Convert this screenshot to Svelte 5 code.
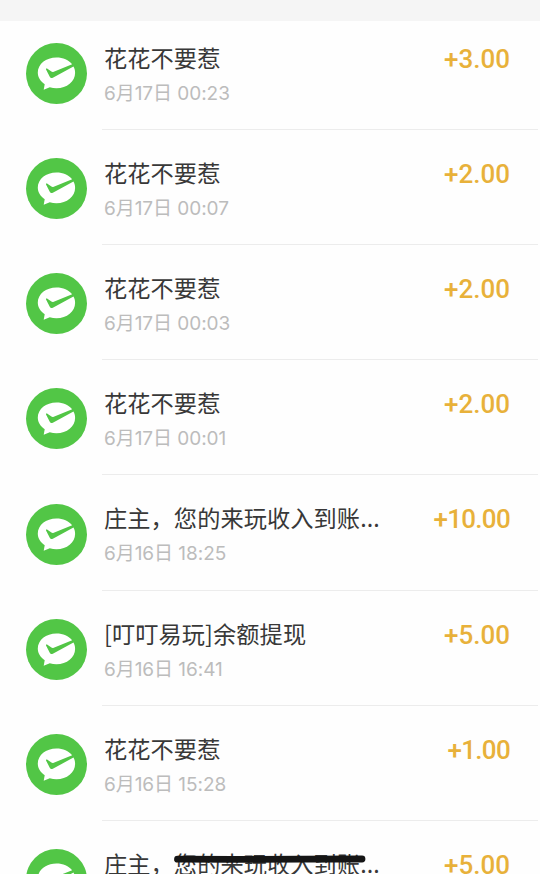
<script>
  // Wallet bill list: one row per incoming payment, newest first.

  const records = [
    { title: "花花不要惹", date: "6月17日", time: "00:23", amount: "+3.00" },
    { title: "花花不要惹", date: "6月17日", time: "00:07", amount: "+2.00" },
    { title: "花花不要惹", date: "6月17日", time: "00:03", amount: "+2.00" },
    { title: "花花不要惹", date: "6月17日", time: "00:01", amount: "+2.00" },
    { title: "庄主，您的来玩收入到账...", date: "6月16日", time: "18:25", amount: "+10.00" },
    { title: "[叮叮易玩]余额提现", date: "6月16日", time: "16:41", amount: "+5.00" },
    { title: "花花不要惹", date: "6月16日", time: "15:28", amount: "+1.00" },
    { title: "庄主，您的来玩收入到账...", date: "", time: "", amount: "+5.00", struck: true },
  ];
</script>

<main class="bill">
  <div class="bill-top"></div>
  <ul class="bill-list">
    {#each records as r}
      <li class="row">
        <svg class="row-icon" viewBox="0 0 60 60" aria-hidden="true">
          <circle cx="30" cy="30" r="30" fill="#52c646" />
          <path
            fill="#fff"
            d="M30 14.2C19.6 14.2 11.6 20.7 11.6 29C11.6 33.6 14.2 37.7 18.4 40.5L17.4 46.1L23.4 43.5C25.5 44.1 27.7 44.4 30 44.4C40.2 44.4 48.3 37.8 48.3 29.4C48.3 27.1 47.8 25 46.7 23.2L26.4 34.1C25.1 34.8 24.1 34.6 23.5 33.5L19.7 26C19.3 25.2 20 24.7 20.7 25.1L25 28.1C25.7 28.6 26.5 28.6 27.3 28.2L45.4 20.8C42.1 16.8 36.4 14.2 30 14.2Z"
          />
        </svg>
        <div class="row-body">
          <div class="row-text">
            <div class="row-title">
              {r.title}
              {#if r.struck}
                <svg class="strike" viewBox="0 0 194 10" aria-hidden="true">
                  <path d="M4.5 5.2L60 5.4L130 5.2L189 5" fill="none" stroke="#151515" stroke-width="6.8" stroke-linecap="round" />
                </svg>
              {/if}
            </div>
            <div class="row-date">{r.date} {r.time}</div>
          </div>
          <div class="row-amount" class:tight={r.amount.startsWith("+1")}>{r.amount}</div>
        </div>
      </li>
    {/each}
  </ul>
</main>

<style>
  :global(body) { background: #fff; overflow: hidden; }
  .bill {
    box-sizing: border-box; height: 874px; overflow: hidden; background: #fefefe;
    font-family: Inter, "Noto Sans CJK SC", sans-serif;
  }
  .bill-top { height: 21px; background: #f5f5f5; }
  .bill-list { margin: -6.4px 0 0; padding: 0; list-style: none; }
  .row { display: flex; height: 115.2px; padding-left: 26px; }
  .row-icon { flex: none; width: 61px; height: 61px; margin-top: 28.2px; }
  .row-body {
    flex: 1; display: flex; justify-content: space-between; box-sizing: border-box;
    margin: 0 2px 0 15px; padding: 25px 28px 0 2px; border-bottom: 1px solid #ececec;
  }
  .row:last-child .row-body { border-bottom: none; }
  .row-title {
    position: relative; height: 37px; line-height: 34px; white-space: nowrap;
    font-family: "Noto Sans CJK SC", sans-serif; font-size: 23.2px; letter-spacing: 0.1px; color: #383838;
  }
  .strike { position: absolute; left: 69px; top: 8px; width: 194px; height: 10px; }
  .row-date {
    height: 34px; line-height: 34px; white-space: nowrap;
    font-size: 19px; letter-spacing: -0.05px; color: #bcbcbc;
  }
  .row-amount {
    height: 34px; line-height: 34px; margin-top: 2px; white-space: nowrap;
    font-family: Roboto, sans-serif; font-size: 26px; font-weight: 500; color: #e8b13a;
  }
  .tight { letter-spacing: -0.7px; }
</style>
